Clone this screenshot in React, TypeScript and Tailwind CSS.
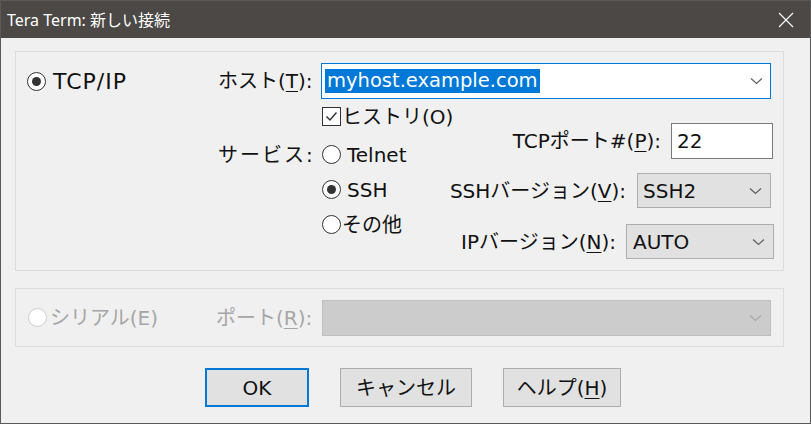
import React from "react";

const ui = "font-['DejaVu_Sans','Noto_Sans_CJK_JP',sans-serif]";

function Chevron({ color = "#606060" }: { color?: string }) {
  return (
    <svg width="13" height="8" viewBox="0 0 13 8" className="shrink-0">
      <polyline points="1,1.5 6.5,6.5 12,1.5" fill="none" stroke={color} strokeWidth="1.2" />
    </svg>
  );
}

function Radio({ checked = false, disabled = false }: { checked?: boolean; disabled?: boolean }) {
  return (
    <span
      className={
        "w-[19px] h-[19px] rounded-full border bg-white flex items-center justify-center shrink-0 " +
        (disabled ? "border-[#cccccc]" : "border-[#333333]")
      }
    >
      {checked && <span className="w-[9px] h-[9px] rounded-full bg-[#333333]" />}
    </span>
  );
}

function Checkbox() {
  return (
    <span className="w-[19px] h-[19px] border border-[#333333] bg-white flex items-center justify-center shrink-0">
      <svg width="15" height="15" viewBox="0 0 15 15">
        <polyline points="2.5,7.5 6,11 12.5,3.5" fill="none" stroke="#333333" strokeWidth="1.5" />
      </svg>
    </span>
  );
}

function U({ children }: { children: React.ReactNode }) {
  return <span className="underline underline-offset-[3px] decoration-1">{children}</span>;
}

function Select({ value, w, pad }: { value: string; w: string; pad: string }) {
  return (
    <div className={`${w} h-full bg-[#e1e1e1] border border-[#adadad] flex items-center ${pad} pr-[8px]`}>
      <span className="flex-1">{value}</span>
      <Chevron />
    </div>
  );
}

function Button({ children, w, focused = false }: { children: React.ReactNode; w: string; focused?: boolean }) {
  return (
    <div
      className={
        `${w} h-[39px] bg-[#e1e1e1] flex items-center justify-center ` +
        (focused ? "border-2 border-[#0078d7]" : "border border-[#adadad]")
      }
    >
      {children}
    </div>
  );
}

export default function App() {
  return (
    <div className={`w-[811px] h-[424px] border border-[#5a5a5a] bg-[#f0f0f0] flex flex-col text-[20px] text-[#111111] whitespace-nowrap ${ui}`}>
      {/* title bar */}
      <div className="h-[37px] shrink-0 bg-[#4b4845] flex items-center pl-[6px] text-white text-[16px] font-['Noto_Sans','Noto_Sans_CJK_JP',sans-serif]">
        <span>Tera Term: 新しい接続</span>
        <svg width="16" height="16" viewBox="0 0 16 16" className="ml-auto mr-[16px]">
          <path d="M1 1 L15 15 M15 1 L1 15" stroke="#ffffff" strokeWidth="1.1" />
        </svg>
      </div>

      <div className="flex-1 flex flex-col pl-[14px] pt-[13px]">
        {/* TCP/IP group */}
        <div className="w-[769px] h-[220px] border border-[#dcdcdc] flex">
          <div className="w-[202px] shrink-0 pl-[11px] pt-[11px]">
            <div className="h-[36px] flex items-center gap-[7px]">
              <Radio checked />
              <span className="text-[22px] tracking-[1px]">TCP/IP</span>
            </div>
          </div>

          <div className="flex-1 flex flex-col pt-[11px]">
            <div className="h-[36px] flex items-center">
              <span className="w-[103px] shrink-0">
                ホスト(<U>T</U>):
              </span>
              <div className="w-[450px] h-full bg-white border border-[#0078d7] flex items-center pl-[3px] pr-[7px]">
                <span className="bg-[#0078d7] text-white leading-[24px] px-[2px] text-[19.5px]">myhost.example.com</span>
                <span className="flex-1" />
                <Chevron />
              </div>
            </div>

            <div className="flex">
              <div className="w-[205px] shrink-0 flex flex-col">
                <div className="h-[35px] flex items-center">
                  <span className="w-[104px] shrink-0" />
                  <Checkbox />
                  <span className="ml-[1px]">ヒストリ(O)</span>
                </div>
                <div className="h-[35px] mt-[3px] flex items-center">
                  <span className="w-[104px] shrink-0 tracking-[2px]">サービス:</span>
                  <Radio />
                  <span className="ml-[6px]">Telnet</span>
                </div>
                <div className="h-[35px] flex items-center">
                  <span className="w-[104px] shrink-0" />
                  <Radio checked />
                  <span className="ml-[6px]">SSH</span>
                </div>
                <div className="h-[35px] flex items-center">
                  <span className="w-[104px] shrink-0" />
                  <Radio />
                  <span className="ml-[1px]">その他</span>
                </div>
              </div>

              <div className="flex-1 flex flex-col items-end">
                <div className="h-[36px] mt-[24px] mr-[10px] flex items-center gap-[10px]">
                  <span>
                    TCPポート#(<U>P</U>):
                  </span>
                  <div className="w-[102px] h-full bg-white border border-[#7a7a7a] flex items-center pl-[5px]">22</div>
                </div>
                <div className="h-[35px] mt-[14px] mr-[12px] flex items-center gap-[11px]">
                  <span>
                    SSHバージョン(<U>V</U>):
                  </span>
                  <Select value="SSH2" w="w-[134px]" pad="pl-[5px]" />
                </div>
                <div className="h-[35px] mt-[16px] mr-[9px] flex items-center gap-[10px]">
                  <span>
                    IPバージョン(<U>N</U>):
                  </span>
                  <Select value="AUTO" w="w-[148px]" pad="pl-[6px]" />
                </div>
              </div>
            </div>
          </div>
        </div>

        {/* serial group */}
        <div className="w-[769px] h-[59px] mt-[17px] border border-[#dcdcdc] flex items-center text-[#a6a6a6]">
          <div className="w-[200px] shrink-0 pl-[12px] flex items-center gap-[3px]">
            <Radio disabled />
            <span>シリアル(E)</span>
          </div>
          <span className="w-[106px] shrink-0">
            ポート(<U>R</U>):
          </span>
          <div className="w-[449px] h-[36px] bg-[#cccccc] border border-[#bfbfbf] flex items-center justify-end pr-[8px]">
            <Chevron color="#a8a8a8" />
          </div>
        </div>

        {/* buttons */}
        <div className="flex mt-[21px] pl-[190px] gap-[31px]">
          <Button w="w-[104px]" focused>
            OK
          </Button>
          <Button w="w-[132px]">キャンセル</Button>
          <Button w="w-[118px]">
            ヘルプ(<U>H</U>)
          </Button>
        </div>
      </div>
    </div>
  );
}
